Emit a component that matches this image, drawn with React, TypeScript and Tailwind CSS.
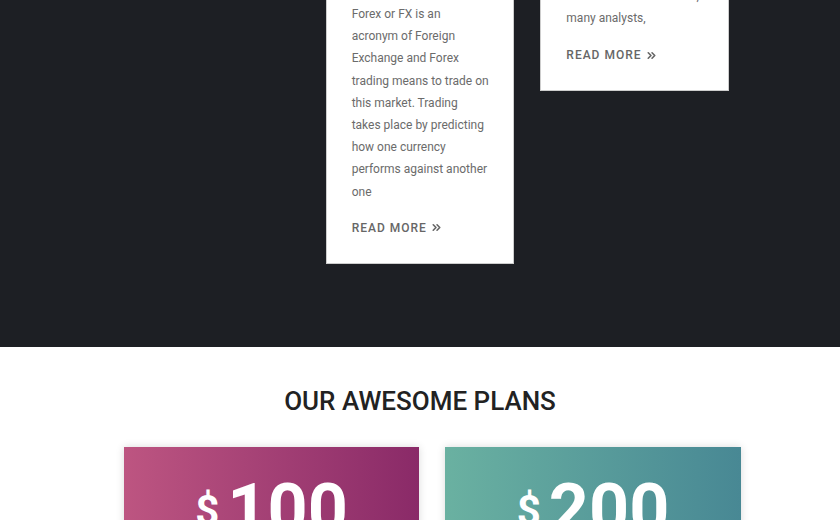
import React from "react";
import { ChevronsRight } from "lucide-react";

function ReadMore({ className = "" }: { className?: string }) {
  return (
    <div className={"flex items-center gap-[3px] text-[12px] leading-[22px] font-medium tracking-[1px] text-[#666] " + className}>
      <span>READ MORE</span>
      <ChevronsRight size={13} strokeWidth={3} className="text-[#666]" />
    </div>
  );
}

function Lines({ lines }: { lines: string[] }) {
  return (
    <p className="text-[12px] leading-[22.2px] text-[#6b6b6b] whitespace-nowrap">
      {lines.map((l, i) => (
        <span key={i} className="block">{l}</span>
      ))}
    </p>
  );
}

function Price({ amount }: { amount: string }) {
  return (
    <div className="flex items-start text-white font-bold">
      <span className="text-[42px] leading-none mt-[16px] mr-[8px]">$</span>
      <span className="text-[70px] leading-none">{amount}</span>
    </div>
  );
}

export default function App() {
  return (
    <div className="w-[840px] h-[520px] overflow-hidden bg-white" style={{ fontFamily: "Roboto, 'Liberation Sans', sans-serif" }}>
      <section className="bg-[#1d1f24] pb-[83px] overflow-hidden">
        <div className="mx-auto w-[618px] grid grid-cols-3 gap-[26px] items-start -mt-[37px]">
          <div />
          <div className="bg-white border border-[#cdcdcd] px-[25px] pt-[39px] pb-[24px]">
            <Lines
              lines={[
                "Forex or FX is an",
                "acronym of Foreign",
                "Exchange and Forex",
                "trading means to trade on",
                "this market. Trading",
                "takes place by predicting",
                "how one currency",
                "performs against another",
                "one",
              ]}
            />
            <ReadMore className="mt-[14px]" />
          </div>
          <div className="bg-white border border-[#cdcdcd] px-[25px] pt-[21px] pb-[24px]">
            <Lines lines={["forex market. As a result,", "many analysts,"]} />
            <ReadMore className="mt-[15px]" />
          </div>
        </div>
      </section>
      <section className="pt-[40px]">
        <h2 className="text-center text-[26px] leading-[29px] font-medium text-[#222]">OUR AWESOME PLANS</h2>
        <div className="mt-[31px] ml-[124px] flex gap-[26px]">
          <div className="w-[295px] h-[160px] shrink-0 bg-gradient-to-r from-[#bd5581] to-[#8a2a68] shadow-[0_0_8px_rgba(0,0,0,0.15)] flex justify-center pt-[27px]">
            <Price amount="100" />
          </div>
          <div className="w-[296px] h-[160px] shrink-0 bg-gradient-to-r from-[#6ab1a1] to-[#488894] shadow-[0_0_8px_rgba(0,0,0,0.15)] flex justify-center pt-[27px]">
            <Price amount="200" />
          </div>
        </div>
      </section>
    </div>
  );
}
